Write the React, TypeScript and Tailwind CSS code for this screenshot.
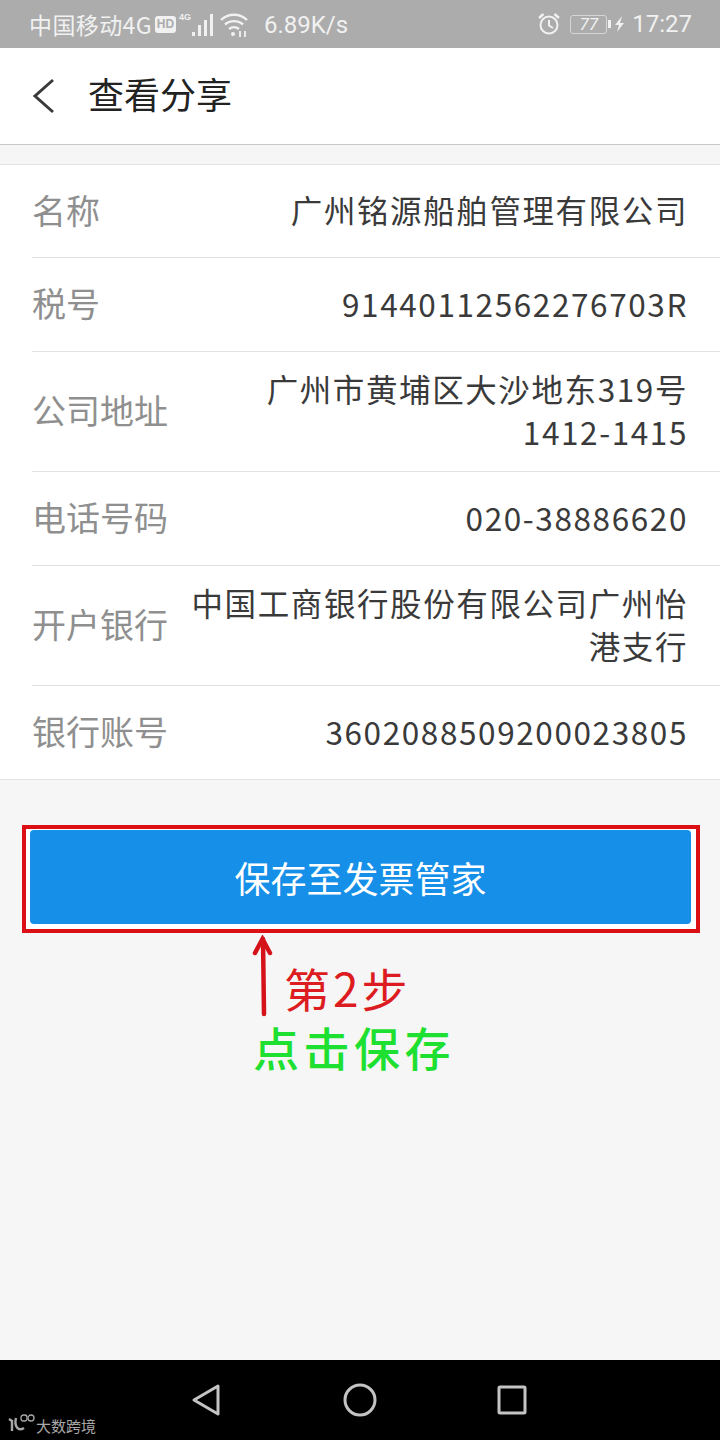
const font = "font-['Noto_Sans_CJK_SC','Noto_Sans',sans-serif]";

const rows: { label: string; value: string[]; h: string }[] = [
  { label: "名称", value: ["广州铭源船舶管理有限公司"], h: "h-[93px]" },
  { label: "税号", value: ["91440112562276703R"], h: "h-[94px]" },
  { label: "公司地址", value: ["广州市黄埔区大沙地东319号", "1412-1415"], h: "h-[120px]" },
  { label: "电话号码", value: ["020-38886620"], h: "h-[94px]" },
  { label: "开户银行", value: ["中国工商银行股份有限公司广州怡", "港支行"], h: "h-[120px]" },
  { label: "银行账号", value: ["3602088509200023805"], h: "h-[93px]" },
];

function StatusBar() {
  return (
    <div className="h-[48px] bg-[#acacac] flex items-center text-[#f1f1f1] pl-[29px] pr-[28px] shrink-0">
      <span className="text-[23px] leading-none tracking-[0.4px]">中国移动4G</span>
      <span className="ml-[3px] w-[21px] h-[17px] bg-[#f1f1f1] rounded-[3px] text-[#acacac] text-[12px] font-bold leading-[17px] text-center font-['Liberation_Sans',sans-serif]">HD</span>
      <svg width="38" height="28" viewBox="0 0 38 28" className="ml-[3px]" fill="#f1f1f1">
        <text x="0" y="10" fontSize="9" fontWeight="700" fontFamily="Liberation Sans">4G</text>
        <rect x="13" y="22" width="3" height="4" />
        <rect x="19" y="15" width="3" height="11" />
        <rect x="25" y="10" width="3" height="16" />
        <rect x="31" y="4" width="3" height="22" />
      </svg>
      <svg width="30" height="28" viewBox="0 0 30 28" className="ml-[2px]" fill="none" stroke="#f1f1f1" strokeWidth="2.4">
        <path d="M2 10 C9 3 21 3 28 10" />
        <path d="M6 14.5 C11 10 19 10 24 14.5" />
        <path d="M10 19 C13 16.5 17 16.5 20 19" />
        <circle cx="14" cy="24" r="2" fill="#f1f1f1" stroke="none" />
        <path d="M21 21v6M26 21v6" strokeWidth="1.8" />
      </svg>
      <span className="ml-[15px] text-[24px] leading-none font-['Roboto',sans-serif] pt-[1px]">6.89K/s</span>
      <div className="flex-1" />
      <svg width="26" height="26" viewBox="0 0 26 26" fill="none" stroke="#f1f1f1" strokeWidth="2">
        <circle cx="13" cy="14" r="8.5" />
        <path d="M13 9v5.5l4 2.5" />
        <path d="M3 7l4.5-4M23 7l-4.5-4" strokeWidth="2.4" />
      </svg>
      <div className="ml-[8px] w-[37px] h-[19px] border border-[#d6d6d6] rounded-[3px] text-[17px] leading-[17px] text-center italic font-['Roboto',sans-serif]">77</div>
      <svg width="18" height="20" viewBox="0 0 18 20" className="ml-[1px]" fill="#f1f1f1">
        <rect x="0" y="6" width="3" height="8" />
        <path d="M14 2 L7 11 H11 L9 18 L16 9 H12 Z" />
      </svg>
      <span className="ml-[6px] text-[24px] leading-none font-['Roboto',sans-serif]">17:27</span>
    </div>
  );
}

function Row({ label, value, h, last }: { label: string; value: string[]; h: string; last: boolean }) {
  return (
    <div className={`${h} ml-[32px] pr-[32px] pb-[3px] flex items-center justify-between ${last ? "" : "border-b border-[#e2e2e2]"}`}>
      <span className="text-[#8f8f8f] text-[34px] leading-none shrink-0">{label}</span>
      <div className="text-[#3a3a3a] text-[31.5px] leading-[43px] text-right tracking-[1.6px] whitespace-nowrap">
        {value.map((line) => (
          <div key={line}>{line}</div>
        ))}
      </div>
    </div>
  );
}

export default function App() {
  return (
    <div className={`${font} w-[720px] h-[1440px] flex flex-col bg-[#f6f6f6] overflow-hidden`}>
      <StatusBar />
      <div className="h-[97px] shrink-0 bg-white border-b border-[#c9c9c9] flex items-center pl-[32px] pb-[1px]">
        <svg width="24" height="36" viewBox="0 0 24 36" fill="none" stroke="#3a3a3a" strokeWidth="3">
          <path d="M21 2 L3 18 L21 34" />
        </svg>
        <span className="ml-[32px] text-[36px] leading-none text-[#222222] pb-[5px]">查看分享</span>
      </div>
      <div className="h-[19px] shrink-0" />
      <div className="shrink-0 bg-white border-y border-[#e2e2e2]">
        {rows.map((r, i) => (
          <Row key={r.label} label={r.label} value={r.value} h={r.h} last={i === rows.length - 1} />
        ))}
      </div>
      <div className="relative flex-1">
        <div className="mt-[45px] ml-[22px] w-[678px] h-[108px] border-[4px] border-[#dc0f14] p-[1px] pb-[5px] pl-[4px] pr-[5px] bg-white">
          <div className="h-full rounded-[4px] bg-[#168fe8] flex items-center justify-center text-white text-[36px] leading-none">
            保存至发票管家
          </div>
        </div>
        <svg width="30" height="85" viewBox="0 0 30 85" className="absolute left-[249px] top-[155px]" fill="none" stroke="#d5121a" strokeWidth="4.5" strokeLinecap="round">
          <path d="M14 4 L15 79" />
          <path d="M6 18 L13.5 4 L21 18" />
        </svg>
        <div className="absolute left-[284px] top-[184px] text-[#dc1c20] text-[46px] leading-none whitespace-nowrap tracking-[3px]">第2步</div>
        <div className="absolute left-[253px] top-[243px] text-[#1de031] text-[46px] leading-none font-medium whitespace-nowrap tracking-[4.5px]">点击保存</div>
      </div>
      <div className="relative h-[80px] shrink-0 bg-black">
        <svg width="30" height="34" viewBox="0 0 30 34" className="absolute left-[191px] top-[23px]" fill="none" stroke="#c4c4c4" strokeWidth="3" strokeLinejoin="round">
          <path d="M27 3 L3 17 L27 31 Z" />
        </svg>
        <svg width="34" height="34" viewBox="0 0 34 34" className="absolute left-[343px] top-[23px]" fill="none" stroke="#c4c4c4" strokeWidth="3">
          <circle cx="17" cy="17" r="15" />
        </svg>
        <svg width="30" height="30" viewBox="0 0 30 30" className="absolute left-[497px] top-[25px]" fill="none" stroke="#c4c4c4" strokeWidth="3">
          <rect x="2" y="2" width="26" height="26" rx="1" />
        </svg>
        <svg width="28" height="20" viewBox="0 0 28 20" className="absolute left-[7px] top-[53px]" fill="none" stroke="#a8a8a8" strokeWidth="2.4">
          <path d="M2 6 L5 8 V18 M9 5 C7 13 11 19 17 15" />
          <rect x="14" y="2" width="6" height="6" rx="2.5" strokeWidth="1.3" />
          <circle cx="24" cy="5" r="3" strokeWidth="1.3" />
        </svg>
        <span className="absolute left-[36px] top-[58px] text-[15px] leading-none text-[#a8a8a8]">大数跨境</span>
      </div>
    </div>
  );
}
